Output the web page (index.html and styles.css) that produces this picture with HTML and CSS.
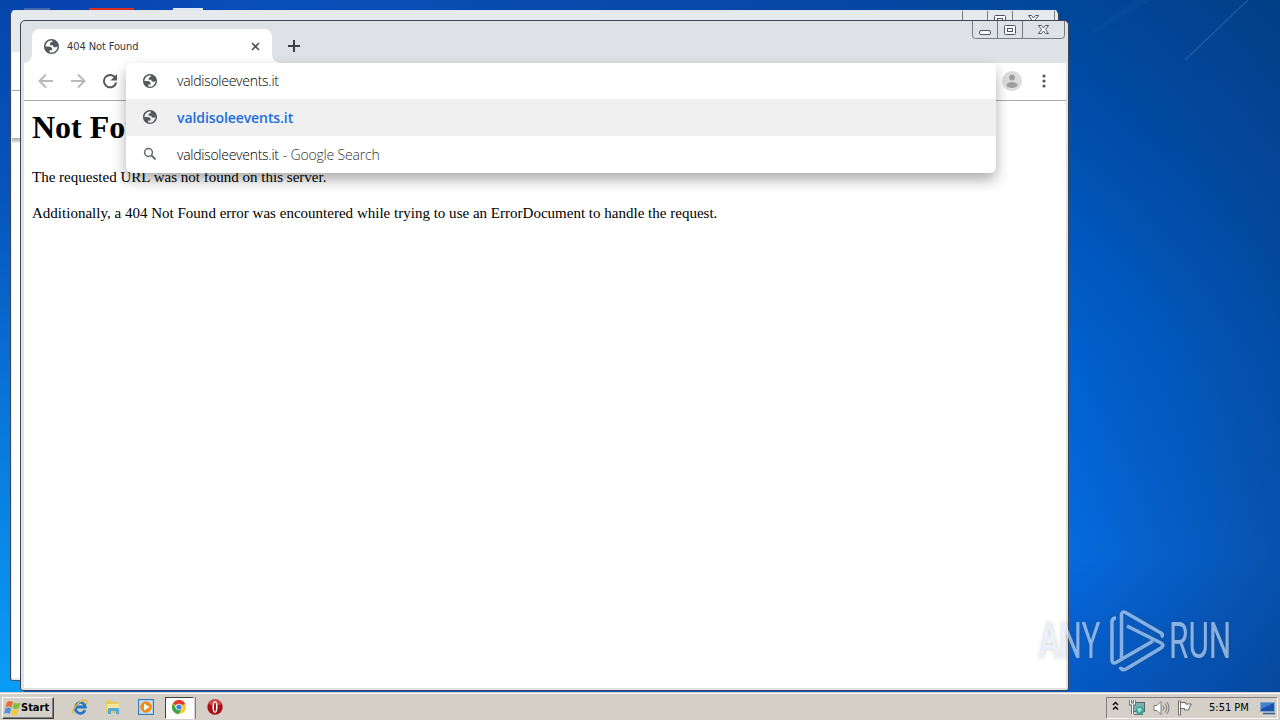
FILE: index.html
```html
<!DOCTYPE html>
<html lang="en">
<head>
  <meta charset="UTF-8">
  <title>404 Not Found</title>
  <link rel="stylesheet" href="styles.css">
</head>
<body>

<svg width="0" height="0" class="defs">
  <symbol id="globe" viewBox="2 2 20 20">
    <path fill-rule="evenodd" d="M12 2C6.480 2 2 6.480 2 12s4.480 10 10 10 10-4.480 10-10S17.520 2 12 2zM4 12h4.400c3.407.022 4.922 1.730 4.543 5.127H9.488v2.470a8.004 8.004 0 0 0 10.498-8.083C19.327 12.504 18.332 13 17 13c-2.137 0-3.206-.916-3.206-2.750h-3.748c-.274-2.728.683-4.092 2.870-4.092 0-.975.327-1.597.811-1.970A8.004 8.004 0 0 0 4 12z"/>
  </symbol>
  <symbol id="controls" viewBox="0 0 93 18">
    <path d="M.5 0v14.500q0 3 3 3h86q3 0 3-3V0M25.500 0v17M50.500 0v17" fill="none" stroke="#777b82"/>
    <rect x="7.500" y="9.500" width="11" height="4" rx="1.500" fill="#fff" stroke="#4b5262"/>
    <rect x="32.500" y="4.500" width="11" height="9" rx="1" fill="#fff" stroke="#4b5262"/>
    <rect x="35.500" y="7.500" width="5" height="3" fill="#fff" stroke="#4b5262"/>
    <path d="M66.500 4.500h3l2 2.500 2-2.500h3l-3 4 3 4h-3l-2-2.500-2 2.500h-3l3-4z" fill="#fff" stroke="#4b5262"/>
  </symbol>
</svg>

<div class="desktop">
  <svg class="rays" width="212" height="693" viewBox="0 0 212 693">
    <path d="M117 60L180 0" stroke="#8ac0ee" stroke-opacity=".18" stroke-width="1.500"/>
    <path d="M14 38L75 -5L95 -5z" fill="#3f91d5" fill-opacity=".07"/>
  </svg>
  <div class="shortcuts"><i></i><i class="red"></i><i class="paper"></i></div>

  <div class="window back-window">
    <svg class="controls" width="93" height="18"><use href="#controls"/></svg>
    <div class="back-page"></div>
  </div>

  <div class="window browser">
    <svg class="controls" width="93" height="18"><use href="#controls"/></svg>
    <div class="tabstrip">
      <div class="tab">
        <svg class="globe" width="15" height="15"><use href="#globe"/></svg>
        <span class="tab-title">404 Not Found</span>
        <svg class="tab-close" width="9" height="9" viewBox="0 0 9 9"><path d="M1 1l7 7M8 1L1 8"/></svg>
      </div>
      <svg class="new-tab" width="12" height="12" viewBox="0 0 12 12"><path d="M6 0v12M0 6h12"/></svg>
    </div>
    <div class="toolbar">
      <svg width="16" height="16" viewBox="0 0 16 16"><path class="nav off" d="M15 8H2M8 1.500L1.500 8 8 14.500"/></svg>
      <svg width="16" height="16" viewBox="0 0 16 16"><path class="nav off" d="M1 8h13M8 1.500L14.500 8 8 14.500"/></svg>
      <svg width="16" height="16" viewBox="0 0 16 16"><path class="nav" d="M13.400 4.800A6.200 6.200 0 1 0 14.200 9.500"/><path d="M15 1v6.500H8.500z" fill="#55585c"/></svg>
      <div class="toolbar-right">
        <svg width="20" height="20" viewBox="0 0 20 20"><circle cx="10" cy="10" r="10" fill="#dcdcdc"/><circle cx="10" cy="6.500" r="3" fill="#9e9e9e"/><ellipse cx="10" cy="14" rx="5.500" ry="3" fill="#9e9e9e"/></svg>
        <svg width="4" height="14" viewBox="0 0 4 14" fill="#55585c"><circle cx="2" cy="2" r="1.600"/><circle cx="2" cy="7" r="1.600"/><circle cx="2" cy="12" r="1.600"/></svg>
      </div>
    </div>
    <div class="page">
      <h1>Not Found</h1>
      <p>The requested URL was not found on this server.</p>
      <p>Additionally, a 404 Not Found error was encountered while trying to use an ErrorDocument to handle the request.</p>
    </div>
    <div class="omnibox">
      <div class="row">
        <svg class="globe" width="14" height="14"><use href="#globe"/></svg>
        <span class="url">valdisoleevents.it</span>
      </div>
      <div class="row selected">
        <svg class="globe" width="14" height="14"><use href="#globe"/></svg>
        <span class="match">valdisoleevents.it</span>
      </div>
      <div class="row">
        <svg class="search" width="14" height="14" viewBox="0 0 14 14"><circle cx="5.500" cy="5.500" r="3.900" fill="none" stroke="#66696d" stroke-width="1.500"/><path d="M8.500 8.500l4 4" stroke="#66696d" stroke-width="1.800"/></svg>
        <span class="url">valdisoleevents.it</span><span class="hint">- Google Search</span>
      </div>
    </div>
  </div>

  <svg class="watermark" width="250" height="80" viewBox="0 0 250 80">
    <g class="mark-text">
      <text transform="translate(10 53) scale(.63 1)">ANY</text>
      <text transform="translate(140 53) scale(.63 1)">RUN</text>
    </g>
    <g class="mark-logo">
      <path d="M87 13q-4 0-4 4v39q1 3 4 1.500L124 36"/>
      <path d="M92.500 53V9q1-3 4-1.500L132 28q3 2 0 4"/>
      <path d="M98 21l34 17q4 2 0 5L97 64q-4 2-6-2"/>
    </g>
  </svg>
</div>

<div class="taskbar">
  <div class="start">
    <svg width="17" height="16" viewBox="0 0 17 16">
      <path d="M3 2q3-2 6 0L7.500 7.500q-3-2-6 0z" fill="#e96b32"/>
      <path d="M10 2.500q3 2 6.500 0L15 8q-3 2-6.500 0z" fill="#7fbd3c"/>
      <path d="M1.300 8.500q3-2 6 0L5.800 14q-3-2-5.800 0z" fill="#4d93d8"/>
      <path d="M8.300 9q3 2 6.500 0l-1.500 5.500q-3 2-6.500 0z" fill="#f4c73e"/>
    </svg>
    <span>Start</span>
  </div>
  <div class="quick">
    <svg width="16" height="16" viewBox="0 0 16 16">
      <path d="M13 11A5 5.500 0 1 1 13.300 8H4" fill="none" stroke="#2478c8" stroke-width="2.800"/>
      <path d="M1.500 14.500C-1.500 11 9-1 14.500 1.300q1.500 1-.5 4" fill="none" stroke="#e9b93b" stroke-width="1.400"/>
    </svg>
    <svg width="16" height="16" viewBox="0 0 16 16">
      <path d="M1 1.500h5l1 1.500h7v11H1z" fill="#e8c860"/>
      <path d="M2 5h12v6H2z" fill="#f7e69c"/>
      <path d="M3 15V9h11v6h-3v-3H6v3z" fill="#55aadb"/>
    </svg>
    <svg width="16" height="16" viewBox="0 0 16 16">
      <rect x=".5" y=".5" width="15" height="15" fill="#a8d2f5" stroke="#3979bb"/>
      <path d="M2 2h12v12H2z" fill="#c5dff5"/>
      <circle cx="8" cy="8" r="5.800" fill="#f28a16"/><path d="M6 4.500v7L11.500 8z" fill="#fff"/>
    </svg>
    <div class="task-active">
      <svg width="14" height="14" viewBox="0 0 14 14">
        <circle cx="7" cy="7" r="7" fill="#fbc928"/>
        <path d="M7 7L.9 3.500A7 7 0 0 1 13.100 3.500z" fill="#df3c2e"/>
        <path d="M.9 3.500A7 7 0 0 0 6.500 14L10 8.700 4 8.700z" fill="#37a34b"/>
        <circle cx="7" cy="7" r="3.300" fill="#fff"/><circle cx="7" cy="7" r="2.600" fill="#3f7fe3"/>
      </svg>
    </div>
    <svg width="16" height="16" viewBox="0 0 16 16">
      <circle cx="8" cy="8" r="7.700" fill="#a81016"/>
      <path d="M1.500 5A7 7 0 0 1 14.500 5q-6 3-13 0z" fill="#d4484a"/>
      <ellipse cx="8" cy="8" rx="2.600" ry="6" fill="#fff"/><ellipse cx="8" cy="8" rx="1" ry="4.700" fill="#a81016"/>
    </svg>
  </div>
  <div class="tray">
    <svg class="chevrons" width="7" height="10" viewBox="0 0 7 10"><path d="M1 4l2.500-2.500L6 4M1 8.500L3.500 6 6 8.500" fill="none" stroke="#000" stroke-width="1.400"/></svg>
    <svg class="network" width="17" height="17" viewBox="0 0 17 17">
      <rect x="4.500" y="3.500" width="11" height="9" fill="#7bb0ae" stroke="#5c6468"/>
      <path d="M5 15.500h9" stroke="#6b7476"/><circle cx="11" cy="11.500" r="4" fill="#3ea397"/>
      <path d="M8 10q4-3 5 1l-3 3z" fill="#91dfce"/>
      <path d="M1.500 1v4h4V1M3.500 5v10" fill="none" stroke="#666" stroke-width="3"/>
      <path d="M1.500 1v4h4V1M3.500 5v10" fill="none" stroke="#fff" stroke-width="1.200"/>
    </svg>
    <svg class="speaker" width="17" height="16" viewBox="0 0 17 16" fill="none" stroke="#7a7a7a">
      <path d="M1 5.500h3L8 1.500v13L4 10.500H1z" fill="#fff"/><path d="M10 5.500q2 2.500 0 5M12 3.500q3.500 4.500 0 9M14 2q4 6 0 12"/>
    </svg>
    <svg class="flag" width="17" height="16" viewBox="0 0 17 16" fill="#fff" stroke="#6c6c6c">
      <path d="M3.500 2.500h5v1.500h6l-2 3-1 3h-4v-1.500h-4z"/><path d="M1.500 1v14h2V1z"/>
    </svg>
    <span class="clock">5:51 PM</span>
    <svg class="show-desktop" width="16" height="14" viewBox="0 0 16 14">
      <path d="M.5 1.500h14v9H.5z" fill="#1852ab" stroke="#81a4cb"/><path d="M1 2h13L1 8z" fill="#477fce"/><path d="M3 12.500h12" stroke="#335c91" stroke-width="1.500"/>
    </svg>
  </div>
</div>

</body>
</html>
```
FILE: styles.css
```css
body {
  margin: 0;
  width: 1280px;
  height: 720px;
  overflow: hidden;
  font-family: "Open Sans", sans-serif;
}

.defs {
  position: absolute;
}

.desktop {
  position: relative;
  height: 692px;
  overflow: hidden;
  background:
    linear-gradient(180deg, #0645ac 0%, #0754bb 28%, #0879dc 62%, #0a9cf5 100%) 0 0 / 24px 100% no-repeat,
    linear-gradient(90deg, #0741ad 0%, #0a4eb8 25%, #0748a6 75%, #00479a 100%) 0 0 / 1069px 21px no-repeat,
    linear-gradient(90deg, transparent 83%, rgba(8, 52, 112, .45) 100%),
    linear-gradient(180deg, #00479a 0%, #0050b0 20%, #0061d0 50%, #066be0 80%, #0559c4 100%);
}

.rays {
  position: absolute;
  right: 0;
  top: 0;
}

.shortcuts {
  position: absolute;
  left: 24px;
  top: 8px;
  display: flex;
  gap: 23px;
}

.shortcuts i {
  width: 26px;
  height: 2px;
  margin-right: 16px;
  background: #426ba8;
}

.shortcuts .red {
  width: 45px;
  background: #d92e22;
}

.shortcuts .paper {
  width: 30px;
  background: #dfe8f3;
}

/* windows */
.window {
  position: absolute;
  box-sizing: border-box;
  width: 1049px;
  height: 671px;
  border: 1px solid #3c4550;
  border-radius: 5px 5px 3px 3px;
  background: #dee1e6;
}

.back-window {
  left: 10px;
  top: 10px;
  padding: 41px 2px 2px 1px;
  border-color: #dfe5ed #35475d #46566b #35475d;
  background: #e7eaed;
}

.back-page {
  height: 626px;
  background: linear-gradient(#fff 38px, #aaa 38px, #aaa 39px, #fff 39px, #fff 86px, #aaa 86px, #ddd 90px, #fff 91px);
}

.browser {
  left: 20px;
  top: 20px;
  display: flex;
  flex-direction: column;
  padding: 0 2px 2px 3px;
}

.controls {
  position: absolute;
  right: 3px;
  top: 0;
}

.tabstrip {
  display: flex;
  align-items: flex-end;
  height: 42px;
  padding-left: 8px;
}

.tab {
  position: relative;
  display: flex;
  align-items: center;
  box-sizing: border-box;
  width: 240px;
  height: 34px;
  padding: 0 12px;
  border-radius: 8px 8px 0 0;
  background: #fff;
}

.tab::before,
.tab::after {
  content: "";
  position: absolute;
  bottom: 0;
  left: -8px;
  width: 8px;
  height: 8px;
  background: radial-gradient(circle at 0 0, transparent 7.5px, #fff 8px);
}

.tab::after {
  left: 240px;
  background: radial-gradient(circle at 100% 0, transparent 7.5px, #fff 8px);
}

.globe {
  fill: #55585c;
}

.tab-title {
  flex: 1;
  margin-left: 8px;
  font: 11px "DejaVu Sans Condensed", "DejaVu Sans", sans-serif;
  font-stretch: condensed;
  letter-spacing: -.1px;
  color: #35383c;
}

.tab-close {
  fill: none;
  stroke: #4e5155;
  stroke-width: 1.6;
}

.new-tab {
  margin: 0 0 11px 16px;
  stroke: #3c4043;
  stroke-width: 2;
}

.toolbar {
  display: flex;
  align-items: center;
  gap: 16px;
  box-sizing: border-box;
  height: 38px;
  padding: 0 20px 1px 14px;
  border-bottom: 1px solid #a9a9a9;
  background: #fff;
}

.nav {
  fill: none;
  stroke: #55585c;
  stroke-width: 2;
}

.off {
  stroke: #b8b9bb;
}

.toolbar-right {
  display: flex;
  align-items: center;
  gap: 20px;
  margin-left: auto;
}

.page {
  flex: 1;
  padding: 8px;
  background: #fff;
  font: 15px/18px "Liberation Serif", serif;
  color: #000;
}

.page h1 {
  margin: 0 0 22px;
  font-size: 32px;
  line-height: 37px;
  white-space: nowrap;
}

.page p {
  margin: 0 0 18px;
  letter-spacing: .01px;
  white-space: nowrap;
}

/* suggestions dropdown */
.omnibox {
  position: absolute;
  left: 105px;
  top: 42px;
  width: 870px;
  overflow: hidden;
  border-radius: 6px;
  background: #fff;
  box-shadow: 0 7px 14px rgba(0, 0, 0, .32);
}

.row {
  display: flex;
  align-items: center;
  box-sizing: border-box;
  height: 37px;
  padding-left: 17px;
  font-size: 14px;
  white-space: nowrap;
}

.row:first-child {
  height: 36px;
  padding-bottom: 1px;
}

.row.selected {
  background-color: #f0f0f0;
}

.selected .globe,
.search {
  margin-bottom: 1px;
}

.url,
.match {
  margin-left: 20px;
  font-weight: 300;
  letter-spacing: -.27px;
  color: #000;
}

.match {
  font-weight: 600;
  letter-spacing: -.08px;
  color: #1a6ddd;
}

.hint {
  margin-left: 4px;
  font-weight: 300;
  letter-spacing: -.18px;
  color: #333;
}

.watermark {
  position: absolute;
  left: 1029px;
  top: 605px;
  filter: drop-shadow(0 0 2px rgba(70, 70, 70, .45));
  opacity: .62;
}

.mark-text {
  font: 400 50px Roboto, sans-serif;
  fill: #dceafa;
}

.mark-logo {
  fill: none;
  stroke: #d3e6fb;
  stroke-width: 3.5;
  stroke-linejoin: round;
}

/* taskbar */
.taskbar {
  display: flex;
  align-items: center;
  box-sizing: border-box;
  height: 28px;
  padding: 2px 0 0 2px;
  border-top: 1px solid #d4d0c8;
  background: linear-gradient(#fff 1px, #d4d0c8 1px);
}

.start {
  display: flex;
  align-items: center;
  box-sizing: border-box;
  width: 52px;
  height: 22px;
  padding-left: 1px;
  border: 1px solid;
  border-color: #fff #404040 #404040 #fff;
  box-shadow: inset -1px -1px #808080;
  font: bold 11px "DejaVu Sans Condensed", "DejaVu Sans", sans-serif;
  font-stretch: condensed;
}

.quick {
  display: flex;
  align-items: center;
  margin-left: 18px;
  gap: 17px;
}

.quick svg {
  margin-bottom: 1px;
}

.task-active {
  display: flex;
  align-items: center;
  justify-content: center;
  box-sizing: border-box;
  width: 29px;
  height: 22px;
  margin: 0 -4px 0 -6px;
  padding-right: 2px;
  border: 1px solid;
  border-color: #404040 #fff #fff #404040;
  background: #fff;
  box-shadow: 1px 0 #d4d0c8, 2px 0 #808080;
}

.tray {
  display: flex;
  align-items: center;
  box-sizing: border-box;
  width: 172px;
  height: 22px;
  margin: 0 2px 0 auto;
  padding-left: 5px;
  border: 1px solid;
  border-color: #808080 #fff #fff #808080;
}

.chevrons {
  margin-bottom: 4px;
}

.network {
  margin-left: 10px;
}

.speaker {
  margin-left: 7px;
}

.flag {
  margin-left: 7px;
}

.clock {
  margin-left: 15px;
  width: 42px;
  font: 11px "DejaVu Sans Condensed", "DejaVu Sans", sans-serif;
  font-stretch: condensed;
  white-space: nowrap;
}

.show-desktop {
  margin-left: 9px;
}
```
